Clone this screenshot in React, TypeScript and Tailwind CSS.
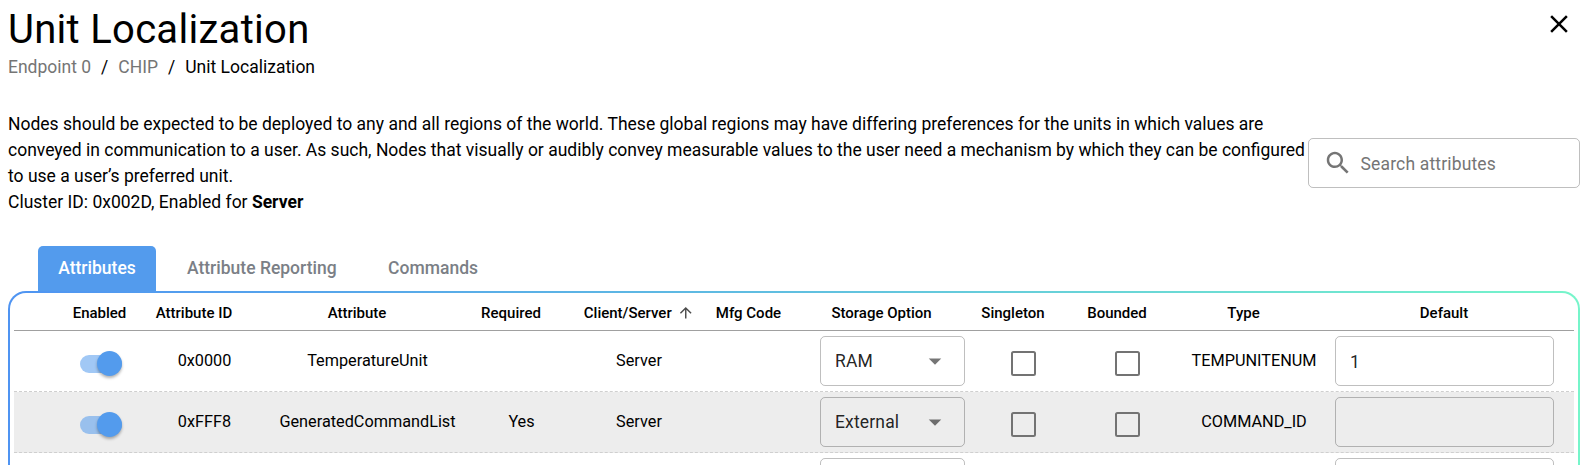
import React from "react";

const columns = [
  { label: "Enabled", header: "pr-[3px]" },
  { label: "Attribute ID", header: "pr-[21px]" },
  { label: "Attribute", header: "pr-[21px]" },
  { label: "Required", header: "pr-[21px]" },
  { label: "Client/Server", header: "", sorted: true },
  { label: "Mfg Code", header: "pr-[20px]" },
  { label: "Storage Option", header: "pr-[22px]" },
  { label: "Singleton", header: "pr-[21px]" },
  { label: "Bounded", header: "pr-[21px]" },
  { label: "Type", header: "pr-[21px]" },
  { label: "Default", header: "pr-[11px]" },
];

const rows = [
  { id: "0x0000", name: "TemperatureUnit", required: "", side: "Server", mfg: "", storage: "RAM", type: "TEMPUNITENUM", value: "1", locked: false },
  { id: "0xFFF8", name: "GeneratedCommandList", required: "Yes", side: "Server", mfg: "", storage: "External", type: "COMMAND_ID", value: "", locked: true },
  { id: "", name: "", required: "", side: "", mfg: "", storage: "", type: "", value: "", locked: false },
];

const grid =
  "grid grid-cols-[90px_117px_209px_99px_136px_103px_165px_97px_111px_142px_249px] pl-[42px]";

function Toggle() {
  return (
    <div className="mt-[5px] flex h-[18px] w-[42px] items-center justify-end rounded-full bg-[#539bed]/55">
      <div className="size-[25px] shrink-0 rounded-full bg-[#539bed] shadow-[0_2px_3px_rgba(0,0,0,0.3)]" />
    </div>
  );
}

function Checkbox() {
  return <div className="mt-[5px] size-[25px] rounded-[2.5px] border-2 border-[#737373]" />;
}

function Select({ value }: { value: string }) {
  return (
    <div className="flex h-[50px] w-[145px] items-center justify-between rounded-[5px] border border-black/25 pr-[14px] pl-[14px] text-[17.5px] tracking-[0.16px] text-black/87">
      <span>{value}</span>
      <svg viewBox="0 0 24 24" className="size-[30px] fill-black/54">
        <path d="M7 10l5 5 5-5z" />
      </svg>
    </div>
  );
}

function Cell({ children }: { children?: React.ReactNode }) {
  return <div className="flex items-center justify-center whitespace-nowrap">{children}</div>;
}

export default function App() {
  return (
    <div className="h-[465px] overflow-hidden bg-white font-[Roboto,sans-serif] text-black">
      <header className="flex items-start justify-between pt-[4px] pr-[7px] pl-[8px]">
        <h1 className="h-[50px] text-[40px] leading-[52px] tracking-[0.29px]">Unit Localization</h1>
        <svg viewBox="0 0 24 24" className="mt-[5px] size-[30px] fill-black">
          <path d="M19 6.41 17.59 5 12 10.59 6.41 5 5 6.41 10.59 12 5 17.59 6.41 19 12 13.41 17.59 19 19 17.59 13.41 12z" />
        </svg>
      </header>

      <nav className="flex h-[26px] items-center pl-[8px] text-[17.5px] whitespace-pre">
        <span className="text-[#757575]">Endpoint 0</span>
        <span className="mx-[10px]">/</span>
        <span className="text-[#757575]">CHIP</span>
        <span className="mx-[10px]">/</span>
        <span>Unit Localization</span>
      </nav>

      <section className="mt-[31px] flex items-center pl-[8px]">
        <div className="w-[1300px] text-[17.5px] leading-[26.1px] whitespace-nowrap">
          <p>
            Nodes should be expected to be deployed to any and all regions of the world. These global regions may have differing preferences for the units in which values are
            <br />
            conveyed in communication to a user. As such, Nodes that visually or audibly convey measurable values to the user need a mechanism by which they can be configured
            <br />
            to use a user’s preferred unit.
          </p>
          <p>
            Cluster ID: 0x002D, Enabled for <b className="font-bold">Server</b>
          </p>
        </div>
        <div className="flex h-[50px] w-[272px] items-center rounded-[5px] border border-black/25 pl-[14px] text-[17.5px] text-[#757575]">
          <svg viewBox="0 0 24 24" className="size-[30px] fill-[#757575]">
            <path d="M15.5 14h-.79l-.28-.27C15.41 12.59 16 11.11 16 9.5 16 5.91 13.09 3 9.5 3S3 5.91 3 9.5 5.91 16 9.5 16c1.61 0 3.09-.59 4.23-1.57l.27.28v.79l5 4.99L20.49 19l-4.99-5zm-6 0C7.01 14 5 11.99 5 9.5S7.01 5 9.5 5 14 7.01 14 9.5 11.99 14 9.5 14z" />
          </svg>
          <span className="ml-[7.5px] pt-[2px] tracking-[0.16px]">Search attributes</span>
        </div>
      </section>

      <div className="mt-[31px] flex h-[45px] pl-[38px] text-[17.5px] leading-[44px] font-medium text-[#7b7f86]">
        <div className="w-[118px] rounded-t-[5px] bg-[#539bed] text-center text-white">Attributes</div>
        <div className="ml-[31px]">Attribute Reporting</div>
        <div className="ml-[51.5px]">Commands</div>
      </div>

      <main className="mr-px ml-[8px] h-[300px] rounded-[18px] border-2 border-transparent px-[4px] [background:linear-gradient(#fff,#fff)_padding-box,linear-gradient(to_right,#4f94f2,#60bfe0,#76f5ca)_border-box]">
        <div className={`${grid} h-[38px] border-b border-[#a0a0a0] pt-[2px] text-[15px] font-medium`}>
          {columns.map((c) => (
            <div key={c.label} className={`flex items-center justify-center whitespace-nowrap ${c.header}`}>
              {c.label}
              {c.sorted && (
                <svg viewBox="0 0 24 24" className="ml-[5px] size-[17.5px] fill-black/70">
                  <path d="M4 12l1.41 1.41L11 7.83V20h2V7.83l5.58 5.59L20 12l-8-8-8 8z" />
                </svg>
              )}
            </div>
          ))}
        </div>
        {rows.map((r, i) => (
          <div
            key={i}
            className={`${grid} h-[61px] border-b border-dashed border-[#cfcfcf] text-[16.25px] ${r.locked ? "bg-[#ededed]" : "bg-white"}`}
          >
            <Cell><Toggle /></Cell>
            <Cell>{r.id}</Cell>
            <Cell>{r.name}</Cell>
            <Cell>{r.required}</Cell>
            <Cell>{r.side}</Cell>
            <Cell>{r.mfg}</Cell>
            <Cell><Select value={r.storage} /></Cell>
            <Cell><Checkbox /></Cell>
            <Cell><Checkbox /></Cell>
            <Cell>{r.type}</Cell>
            <div className="flex items-center pl-[10px]">
              <div className="flex h-[50px] w-[219px] items-center rounded-[5px] border border-black/25 pt-[2px] pl-[14px] text-[17.5px] text-black/87">
                {r.value}
              </div>
            </div>
          </div>
        ))}
      </main>
    </div>
  );
}
